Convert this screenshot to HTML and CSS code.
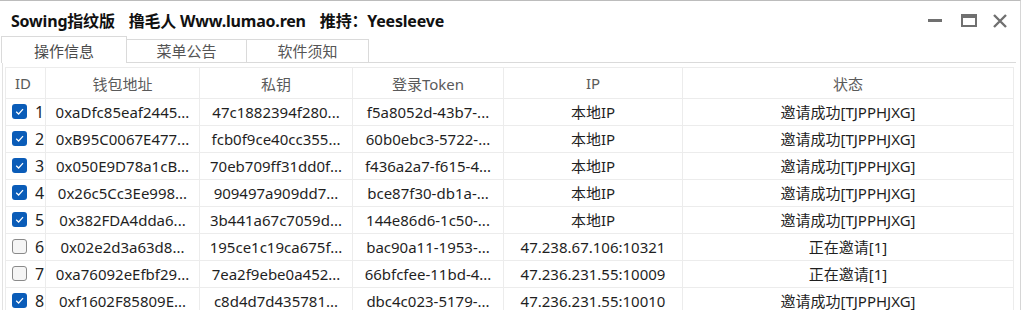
FILE: index.html
```html
<!DOCTYPE html>
<html lang="zh-CN">
<head>
<meta charset="utf-8">
<title>Sowing指纹版</title>
<link rel="stylesheet" href="styles.css">
</head>
<body>
<div class="window">
  <div class="titlebar">
    <div class="title"><span>Sowing指纹版</span><span>撸毛人 Www.lumao.ren</span><span>推持：Yeesleeve</span></div>
    <div class="controls">
      <svg class="ctl ctl-min" width="16" height="16" viewBox="0 0 16 16"><rect x="1" y="6" width="14" height="3" fill="#707070"/></svg>
      <svg class="ctl ctl-max" width="16" height="14" viewBox="0 0 16 14"><rect x="1" y="1" width="14" height="11" fill="none" stroke="#707070" stroke-width="2"/><rect x="1" y="1" width="14" height="3" fill="#707070"/></svg>
      <svg class="ctl ctl-close" width="16" height="16" viewBox="0 0 16 16"><path d="M2 2 L14 14 M14 2 L2 14" stroke="#707070" stroke-width="2.4" stroke-linecap="butt"/></svg>
    </div>
  </div>
  <div class="tabs">
    <div class="tab tab-active">操作信息</div>
    <div class="tab tab-2">菜单公告</div>
    <div class="tab tab-3">软件须知</div>
  </div>
  <div class="panel">
    <table class="grid">
      <colgroup>
        <col class="c-id"><col class="c-wallet"><col class="c-key"><col class="c-token"><col class="c-ip"><col class="c-state">
      </colgroup>
      <thead>
        <tr><th class="th-id">ID</th><th>钱包地址</th><th>私钥</th><th>登录Token</th><th>IP</th><th>状态</th></tr>
      </thead>
      <tbody>
        <tr><td class="td-id"><span class="cb on"><svg width="11" height="11" viewBox="0 0 10 10"><path d="M2 5.2 L4.2 7.3 L8.2 2.9" fill="none" stroke="#fff" stroke-width="1.1"/></svg></span><span class="num">1</span></td><td>0xaDfc85eaf2445...</td><td>47c1882394f280...</td><td>f5a8052d-43b7-...</td><td>本地IP</td><td>邀请成功[TJPPHJXG]</td></tr>
        <tr><td class="td-id"><span class="cb on"><svg width="11" height="11" viewBox="0 0 10 10"><path d="M2 5.2 L4.2 7.3 L8.2 2.9" fill="none" stroke="#fff" stroke-width="1.1"/></svg></span><span class="num">2</span></td><td>0xB95C0067E477...</td><td>fcb0f9ce40cc355...</td><td>60b0ebc3-5722-...</td><td>本地IP</td><td>邀请成功[TJPPHJXG]</td></tr>
        <tr><td class="td-id"><span class="cb on"><svg width="11" height="11" viewBox="0 0 10 10"><path d="M2 5.2 L4.2 7.3 L8.2 2.9" fill="none" stroke="#fff" stroke-width="1.1"/></svg></span><span class="num">3</span></td><td>0x050E9D78a1cB...</td><td>70eb709ff31dd0f...</td><td>f436a2a7-f615-4...</td><td>本地IP</td><td>邀请成功[TJPPHJXG]</td></tr>
        <tr><td class="td-id"><span class="cb on"><svg width="11" height="11" viewBox="0 0 10 10"><path d="M2 5.2 L4.2 7.3 L8.2 2.9" fill="none" stroke="#fff" stroke-width="1.1"/></svg></span><span class="num">4</span></td><td>0x26c5Cc3Ee998...</td><td>909497a909dd7...</td><td>bce87f30-db1a-...</td><td>本地IP</td><td>邀请成功[TJPPHJXG]</td></tr>
        <tr><td class="td-id"><span class="cb on"><svg width="11" height="11" viewBox="0 0 10 10"><path d="M2 5.2 L4.2 7.3 L8.2 2.9" fill="none" stroke="#fff" stroke-width="1.1"/></svg></span><span class="num">5</span></td><td>0x382FDA4dda6...</td><td>3b441a67c7059d...</td><td>144e86d6-1c50-...</td><td>本地IP</td><td>邀请成功[TJPPHJXG]</td></tr>
        <tr><td class="td-id"><span class="cb off"></span><span class="num">6</span></td><td>0x02e2d3a63d8...</td><td>195ce1c19ca675f...</td><td>bac90a11-1953-...</td><td>47.238.67.106:10321</td><td>正在邀请[1]</td></tr>
        <tr><td class="td-id"><span class="cb off"></span><span class="num">7</span></td><td>0xa76092eEfbf29...</td><td>7ea2f9ebe0a452...</td><td>66bfcfee-11bd-4...</td><td>47.236.231.55:10009</td><td>正在邀请[1]</td></tr>
        <tr><td class="td-id"><span class="cb on"><svg width="11" height="11" viewBox="0 0 10 10"><path d="M2 5.2 L4.2 7.3 L8.2 2.9" fill="none" stroke="#fff" stroke-width="1.1"/></svg></span><span class="num">8</span></td><td>0xf1602F85809E...</td><td>c8d4d7d435781...</td><td>dbc4c023-5179-...</td><td>47.236.231.55:10010</td><td>邀请成功[TJPPHJXG]</td></tr>
      </tbody>
    </table>
  </div>
</div>
</body>
</html>
```
FILE: styles.css
```css
html, body {
  margin: 0;
  padding: 0;
  background: #ffffff;
  overflow: hidden;
}

body {
  font-family: "Noto Sans", "Noto Sans CJK SC", sans-serif;
  color: #1f1f1f;
}

.window {
  width: 1020px;
  height: 309px;
  border-top: 1px solid #bcbcbc;
  border-right: 1px solid #d6d6d6;
  background: #ffffff;
  overflow: hidden;
}

.titlebar {
  height: 35px;
  display: flex;
  align-items: center;
  justify-content: space-between;
  padding: 2px 12px 0 11px;
  box-sizing: border-box;
}

.title {
  display: flex;
  gap: 14px;
  font-size: 16px;
  font-weight: 700;
  color: #111;
  letter-spacing: -0.2px;
}

.controls {
  display: flex;
  align-items: center;
  padding-top: 2px;
}

.ctl { display: block; }
.ctl-max { margin-left: 18px; }
.ctl-close { margin-left: 15px; }

.tabs {
  display: flex;
  align-items: flex-end;
  height: 27px;
  margin-left: 1px;
  margin-bottom: -1px;
  position: relative;
  z-index: 1;
}

.tab {
  box-sizing: border-box;
  height: 23px;
  margin-bottom: 1px;
  border: 1px solid #dadada;
  border-bottom: none;
  background: #ffffff;
  font-size: 15px;
  color: #555;
  display: flex;
  align-items: center;
  justify-content: center;
  line-height: 1;
}

.tab-active {
  height: 27px;
  margin-bottom: 0;
  width: 126px;
  padding-top: 2px;
  color: #4a4a4a;
}

.tab-2 {
  width: 120px;
  border-left: none;
}

.tab-3 {
  width: 122px;
  border-left: none;
}

.panel {
  border-top: 1px solid #dadada;
  border-left: 1px solid #e2e2e2;
  margin-left: 2px;
  margin-right: 4px;
  padding: 4px 0 0 2px;
  height: 260px;
}

.grid {
  table-layout: fixed;
  border-collapse: collapse;
  width: 1008px;
  font-size: 15px;
  border: 1px solid #e6e6e6;
}

.c-id { width: 40px; }
.c-wallet { width: 154px; }
.c-key { width: 153px; }
.c-token { width: 151px; }
.c-ip { width: 179px; }
.c-state { width: 331px; }

.grid th {
  height: 30px;
  font-weight: 400;
  color: #5a5a5a;
  text-align: center;
  border: 1px solid #ececec;
  padding: 0;
  white-space: nowrap;
  overflow: hidden;
}

.grid th.th-id {
  text-align: left;
  padding-left: 9px;
}

.grid td {
  height: 26px;
  text-align: center;
  border: 1px solid #ececec;
  padding: 0;
  white-space: nowrap;
  overflow: hidden;
  color: #1f1f1f;
  line-height: 1;
}

.grid td.td-id {
  text-align: left;
  padding-left: 6px;
}

.td-id .cb,
.td-id .num {
  display: inline-block;
  vertical-align: middle;
}

.cb {
  box-sizing: border-box;
  width: 15px;
  height: 15px;
  border-radius: 3px;
  position: relative;
  top: -1px;
}

.cb svg {
  display: block;
  margin: 2px;
}

.cb.on {
  background: #0a5cb8;
}

.cb.off {
  background: #f5f5f5;
  border: 1px solid #8a8a8a;
}

.num {
  margin-left: 8px;
  font-size: 16px;
}
```
